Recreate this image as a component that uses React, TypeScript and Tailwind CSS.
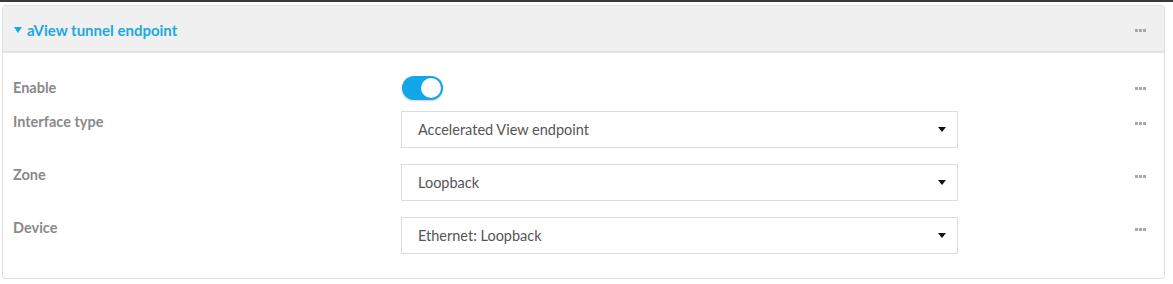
import React from "react";

function Dots() {
  return (
    <div className="flex gap-[1px]">
      <span className="w-[3px] h-[3px] bg-[#a8a8a8]" />
      <span className="w-[3px] h-[3px] bg-[#a8a8a8]" />
      <span className="w-[3px] h-[3px] bg-[#a8a8a8]" />
    </div>
  );
}

function Select({ value }: { value: string }) {
  return (
    <div className="w-[557px] h-[37px] border border-[#dcdcdc] bg-white flex items-center justify-between pl-[16px] pr-[11px]">
      <span className="text-[14.5px] text-[#555]">{value}</span>
      <svg width="8" height="5" viewBox="0 0 8 5">
        <path d="M0 0 H8 L4 5 Z" fill="#111" />
      </svg>
    </div>
  );
}

export default function App() {
  return (
    <div className="w-[1173px] h-[284px] bg-white" style={{ fontFamily: "Lato, 'Open Sans', sans-serif" }}>
      <div className="h-[2px] bg-[#3a3a3a]" />
      <div className="pt-[3px] pl-[2px] pr-[8px]">
        <div className="h-[274px] border border-[#e0e0e0] rounded-[3px] overflow-hidden">
          <div className="h-[47px] bg-[#f0f0f0] border-b-2 border-[#e2e2e2] flex items-center justify-between pt-[3px] pl-[11px] pr-[18px]">
            <span className="text-[15px] font-bold text-[#1aa9e1] flex items-center gap-[5px]">
              <svg width="8" height="6" viewBox="0 0 8 6"><path d="M0 0 H8 L4 6 Z" fill="#1aa9e1" /></svg>
              aView tunnel endpoint
            </span>
            <Dots />
          </div>
          <div className="pt-[22px]">
            <div className="h-[26px] flex items-center justify-between pl-[10px] pr-[18px]">
              <span className="w-[389px] text-[14.5px] font-bold text-[#8a8a8a]">Enable</span>
              <div className="flex-1">
                <div className="w-[41px] h-[24px] rounded-full bg-[#12a7e8] relative shadow-[0_1px_2px_rgba(0,0,0,0.2)]">
                  <div className="absolute right-[2px] top-[2px] w-[20px] h-[20px] rounded-full bg-white" />
                </div>
              </div>
              <Dots />
            </div>
            <div className="flex flex-col gap-[16px] mt-[10px]">
              {[
                ["Interface type", "Accelerated View endpoint"],
                ["Zone", "Loopback"],
                ["Device", "Ethernet: Loopback"],
              ].map(([l, v]) => (
                <div key={l} className="h-[37px] flex items-start justify-between pl-[10px] pr-[18px]">
                  <span className="w-[388px] text-[14.5px] font-bold text-[#8a8a8a] leading-[18px] pt-[2px]">{l}</span>
                  <div className="flex-1">
                    <Select value={v} />
                  </div>
                  <div className="pt-[11px]"><Dots /></div>
                </div>
              ))}
            </div>
          </div>
        </div>
      </div>
    </div>
  );
}
